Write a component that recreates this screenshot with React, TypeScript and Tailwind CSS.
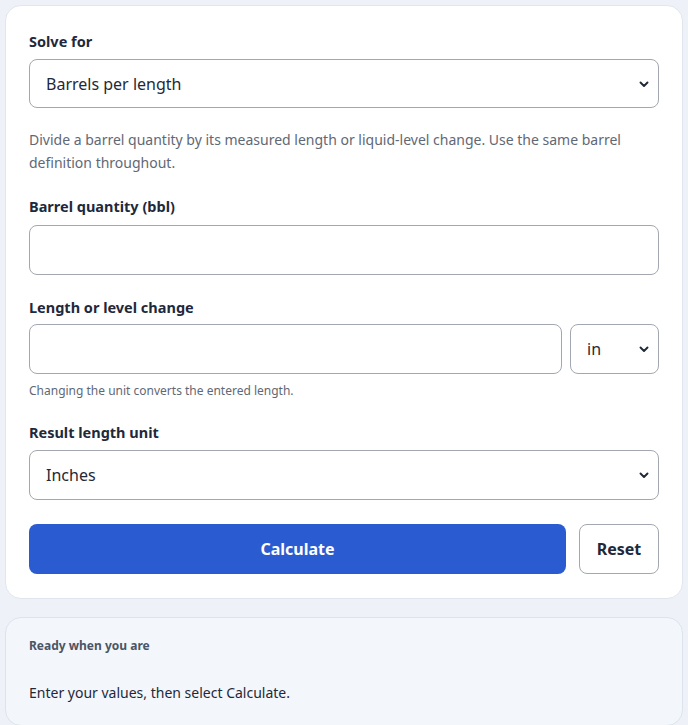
import { useState } from 'react'

const FONT = '[font-family:"Noto_Sans","Open_Sans",Arial,sans-serif]'

function Chevron() {
  return (
    <svg className="pointer-events-none absolute right-[10px] top-1/2 h-[10px] w-[10px] -translate-y-1/2" viewBox="0 0 10 10" fill="none">
      <path d="M1.5 3.5 5 7l3.5-3.5" stroke="#1f2937" strokeWidth="1.9" strokeLinecap="round" strokeLinejoin="round" />
    </svg>
  )
}

function Select({ value, options, onChange, className = '', h = 'h-[49px]' }: { value: string; options: string[]; onChange: (v: string) => void; className?: string; h?: string }) {
  return (
    <div className={`relative ${className}`}>
      <select
        value={value}
        onChange={(e) => onChange(e.target.value)}
        className={`block ${h} w-full appearance-none rounded-[8px] border border-[#a3a8b0] bg-white pl-[16px] pr-8 text-[16px] text-[#1f2937] outline-none`}
      >
        {options.map((o) => (
          <option key={o}>{o}</option>
        ))}
      </select>
      <Chevron />
    </div>
  )
}

export default function App() {
  const [solveFor, setSolveFor] = useState('Barrels per length')
  const [qty, setQty] = useState('')
  const [len, setLen] = useState('')
  const [unit, setUnit] = useState('in')
  const [resultUnit, setResultUnit] = useState('Inches')

  return (
    <div className={`min-h-screen bg-[#eef2f8] px-[5px] pt-[5px] ${FONT}`}>
      {/* Form card */}
      <div className="rounded-[16px] border border-[#e1e6ee] bg-white px-[23px] pt-[24px] pb-[24px]">
        <label className="block text-[14.5px] font-bold leading-[22px] text-[#1e293b]">Solve for</label>
        <Select
          className="mt-[7px]"
          value={solveFor}
          onChange={setSolveFor}
          options={['Barrels per length', 'Barrel quantity', 'Length or level change']}
        />
        <p className="mt-[20px] text-[14px] leading-[23px] text-[#5f6875]">
          Divide a barrel quantity by its measured length or liquid-level change. Use the same barrel definition throughout.
        </p>

        <label className="mt-[21px] block text-[14.5px] font-bold leading-[22px] text-[#1e293b]">Barrel quantity (bbl)</label>
        <input
          value={qty}
          onChange={(e) => setQty(e.target.value)}
          className="mt-[8px] block h-[50px] w-full rounded-[8px] border border-[#a3a8b0] bg-white px-[16px] text-[16px] outline-none"
        />

        <label className="mt-[21px] block text-[14.5px] font-bold leading-[22px] text-[#1e293b]">Length or level change</label>
        <div className="mt-[6px] flex gap-[8px]">
          <input
            value={len}
            onChange={(e) => setLen(e.target.value)}
            className="block h-[50px] flex-1 rounded-[8px] border border-[#a3a8b0] bg-white px-[16px] text-[16px] outline-none"
          />
          <Select className="w-[89px]" h="h-[50px]" value={unit} onChange={setUnit} options={['in', 'ft', 'cm', 'm']} />
        </div>
        <p className="mt-[8px] text-[12px] leading-[18px] text-[#5f6875]">Changing the unit converts the entered length.</p>

        <label className="mt-[21px] block text-[14.5px] font-bold leading-[22px] text-[#1e293b]">Result length unit</label>
        <Select
          className="mt-[7px]"
          h="h-[50px]"
          value={resultUnit}
          onChange={setResultUnit}
          options={['Inches', 'Feet', 'Centimeters', 'Meters']}
        />

        <div className="mt-[24px] flex gap-[13px]">
          <button className="h-[50px] flex-1 rounded-[8px] bg-[#2a5bd0] text-[16px] font-bold text-white">Calculate</button>
          <button
            onClick={() => {
              setQty('')
              setLen('')
            }}
            className="h-[50px] w-[80px] rounded-[8px] border border-[#a3a8b0] bg-white text-[16px] font-bold text-[#1e293b]"
          >
            Reset
          </button>
        </div>
      </div>

      {/* Result card */}
      <div className="mt-[18px] rounded-[16px] border border-[#dde3ec] bg-[#f3f6fb] px-[23px] pt-[19px] pb-[20px]">
        <p className="text-[12px] font-bold leading-[18px] text-[#4b5563]">Ready when you are</p>
        <p className="mt-[26px] text-[14px] leading-[24px] text-[#1f2937]">Enter your values, then select Calculate.</p>
      </div>
    </div>
  )
}
